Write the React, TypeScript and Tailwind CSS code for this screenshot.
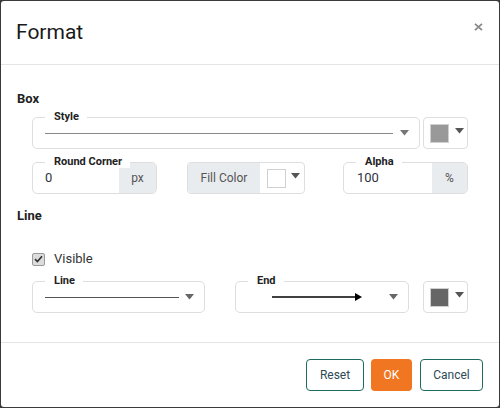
import React from "react";

const Caret = ({ color = "#666" }: { color?: string }) => (
  <svg width="9" height="6" viewBox="0 0 9 6" className="shrink-0">
    <path d="M0 0 L9 0 L4.5 5.5 Z" fill={color} />
  </svg>
);

const Legend = ({ text }: { text: string }) => (
  <span className="absolute left-[12px] top-[-8px] bg-white pl-[9px] pr-[8px] text-[11px] font-bold leading-[13px] text-[#222]">
    {text}
  </span>
);

const ColorButton = ({ color }: { color: string }) => (
  <div className="flex h-[32px] w-[45px] items-center rounded-[4px] border border-[#dedede] bg-white pl-[6px]">
    <div className="h-[19px] w-[19px] border border-[#d0d0d0]" style={{ background: color }} />
    <div className="ml-[6px] -mt-[5px]">
      <Caret color="#555" />
    </div>
  </div>
);

export default function App() {
  return (
    <div className="h-[408px] w-[500px] bg-[#3a3a3a] pl-px pt-px" style={{ fontFamily: "Roboto, 'Liberation Sans', sans-serif" }}>
      <div className="flex h-[406px] w-[498px] flex-col overflow-hidden rounded-[3px] bg-white">
        {/* Header */}
        <div className="flex h-[64px] shrink-0 items-start justify-between border-b border-[#e5e5e5] pl-[15px] pr-[16px]">
          <div className="mt-[16px] text-[21px] leading-[31px] text-[#1a1a1a]">Format</div>
          <svg width="9" height="8" viewBox="0 0 9 8" className="mt-[22px]">
            <path d="M1 0.8 L8 7.2 M8 0.8 L1 7.2" stroke="#8a8a8a" strokeWidth="1.8" />
          </svg>
        </div>

        {/* Body */}
        <div className="h-[277px] shrink-0 pt-[25px]">
          <div className="pl-[16px] text-[13px] font-bold leading-[18px] text-[#222]">Box</div>

          {/* Style row */}
          <div className="mt-[9px] flex pl-[31px]">
            <div className="relative flex h-[32px] w-[388px] items-center rounded-[5px] border border-[#dedede] pl-[12px] pr-[10px]">
              <Legend text="Style" />
              <div className="h-px flex-1 bg-[#888]" />
              <div className="ml-[7px]">
                <Caret color="#777" />
              </div>
            </div>
            <div className="ml-[3px]">
              <ColorButton color="#999999" />
            </div>
          </div>

          {/* Round corner / fill / alpha */}
          <div className="mt-[13px] flex pl-[31px]">
            <div className="relative flex h-[32px] w-[125px] rounded-[5px] border border-[#dedede]">
              <div className="flex flex-1 items-center pl-[12px] text-[13px] text-[#2e3440]">0</div>
              <div className="flex w-[37px] items-center justify-center rounded-r-[4px] bg-[#e9ecef] text-[12px] text-[#555]">px</div>
              <Legend text="Round Corner" />
            </div>
            <div className="ml-[30px] flex h-[32px] w-[118px] rounded-[4px] border border-[#dedede]">
              <div className="flex w-[72px] items-center justify-center rounded-l-[3px] bg-[#e9ecef] text-[12px] text-[#555]">Fill Color</div>
              <div className="flex flex-1 items-center pl-[7px]">
                <div className="h-[19px] w-[19px] border border-[#d0d0d0] bg-white" />
                <div className="ml-[5px] -mt-[5px]">
                  <Caret color="#555" />
                </div>
              </div>
            </div>
            <div className="relative ml-[38px] flex h-[32px] w-[125px] rounded-[5px] border border-[#dedede]">
              <div className="flex flex-1 items-center pl-[13px] text-[13px] text-[#2e3440]">100</div>
              <div className="flex w-[35px] items-center justify-center rounded-r-[4px] bg-[#e9ecef] text-[12px] text-[#555]">%</div>
              <Legend text="Alpha" />
            </div>
          </div>

          <div className="mt-[13px] pl-[16px] text-[13px] font-bold leading-[18px] text-[#222]">Line</div>

          {/* Visible */}
          <div className="mt-[25px] flex h-[18px] items-center pl-[31px]">
            <div className="flex h-[13px] w-[13px] items-center justify-center rounded-[2px] border border-[#9a9a9a] bg-[#dcdcdc]">
              <svg width="9" height="8" viewBox="0 0 9 8">
                <path d="M1 4.2 L3.4 6.6 L8 1.2" stroke="#333" strokeWidth="1.7" fill="none" />
              </svg>
            </div>
            <span className="ml-[9px] text-[13px] text-[#333]">Visible</span>
          </div>

          {/* Line row */}
          <div className="mt-[13px] flex pl-[31px]">
            <div className="relative flex h-[32px] w-[173px] items-center rounded-[5px] border border-[#dedede] pl-[12px] pr-[10px]">
              <Legend text="Line" />
              <div className="h-px w-[135px] bg-[#555]" />
              <div className="ml-[6px]">
                <Caret color="#666" />
              </div>
            </div>
            <div className="relative ml-[30px] flex h-[32px] w-[174px] items-center rounded-[5px] border border-[#dedede] pl-[36px] pr-[10px]">
              <Legend text="End" />
              <svg width="90" height="10" viewBox="0 0 90 10">
                <path d="M0 5 L84 5" stroke="#000" strokeWidth="1.3" />
                <path d="M83 1 L90 5 L83 9 Z" fill="#000" />
              </svg>
              <div className="ml-auto">
                <Caret color="#666" />
              </div>
            </div>
            <div className="ml-[14px]">
              <ColorButton color="#666666" />
            </div>
          </div>
        </div>

        {/* Footer */}
        <div className="flex h-[65px] shrink-0 items-center justify-end border-t border-[#e5e5e5] pr-[16px]">
          <button className="h-[32px] w-[58px] rounded-[4px] border border-[#1d6b60] bg-white text-[12px] text-[#2d4a55]">Reset</button>
          <button className="ml-[7px] h-[32px] w-[41px] rounded-[4px] bg-[#f07622] text-[12px] text-white">OK</button>
          <button className="ml-[8px] h-[32px] w-[63px] rounded-[4px] border border-[#1d6b60] bg-white text-[12px] text-[#2d4a55]">Cancel</button>
        </div>
      </div>
    </div>
  );
}
